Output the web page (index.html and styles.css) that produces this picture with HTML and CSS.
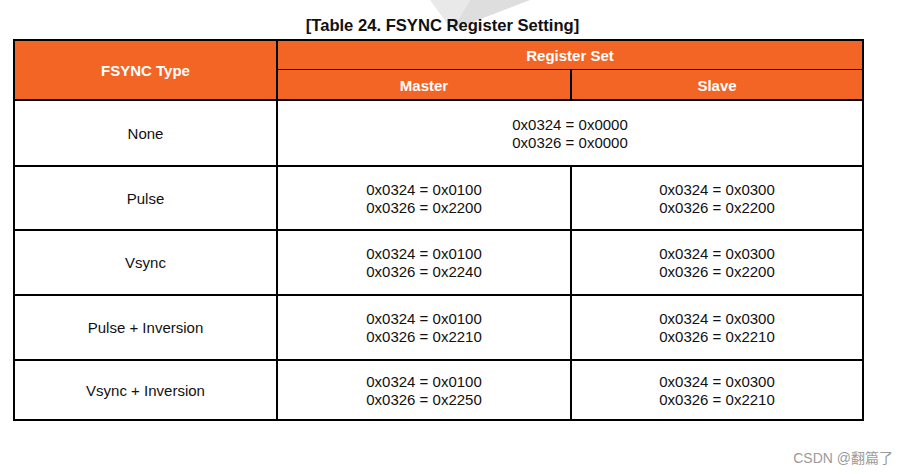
FILE: index.html
```html
<!DOCTYPE html>
<html lang="en">
<head>
<meta charset="utf-8">
<title>FSYNC Register Setting</title>
<link rel="stylesheet" href="styles.css">
</head>
<body>
<svg class="bg-mark" width="110" height="40" viewBox="0 0 110 40" aria-hidden="true">
  <polygon points="0,0 40,0 22,30" fill="#e9e9e9"/>
  <polygon points="40,0 100,0 22,30" fill="#dedede"/>
</svg>
<h1 class="title">[Table 24. FSYNC Register Setting]</h1>
<table class="reg">
  <colgroup>
    <col class="c-type">
    <col class="c-master">
    <col class="c-slave">
  </colgroup>
  <thead>
    <tr class="h-top">
      <th rowspan="2" class="th-type">FSYNC Type</th>
      <th colspan="2" class="th-set">Register Set</th>
    </tr>
    <tr class="h-sub">
      <th>Master</th>
      <th>Slave</th>
    </tr>
  </thead>
  <tbody>
    <tr class="r-none">
      <td>None</td>
      <td colspan="2">0x0324 = 0x0000<br>0x0326 = 0x0000</td>
    </tr>
    <tr class="r-pulse">
      <td>Pulse</td>
      <td>0x0324 = 0x0100<br>0x0326 = 0x2200</td>
      <td>0x0324 = 0x0300<br>0x0326 = 0x2200</td>
    </tr>
    <tr class="r-vsync">
      <td>Vsync</td>
      <td>0x0324 = 0x0100<br>0x0326 = 0x2240</td>
      <td>0x0324 = 0x0300<br>0x0326 = 0x2200</td>
    </tr>
    <tr class="r-pinv">
      <td>Pulse + Inversion</td>
      <td>0x0324 = 0x0100<br>0x0326 = 0x2210</td>
      <td>0x0324 = 0x0300<br>0x0326 = 0x2210</td>
    </tr>
    <tr class="r-vinv">
      <td>Vsync + Inversion</td>
      <td>0x0324 = 0x0100<br>0x0326 = 0x2250</td>
      <td>0x0324 = 0x0300<br>0x0326 = 0x2210</td>
    </tr>
  </tbody>
</table>
<div class="credit">CSDN @翻篇了</div>
</body>
</html>
```
FILE: styles.css
```css
html, body {
  margin: 0;
  padding: 0;
  background: #ffffff;
}

body {
  position: relative;
  width: 908px;
  height: 474px;
  overflow: hidden;
  font-family: "Liberation Sans", Arial, sans-serif;
  color: #111111;
}

.bg-mark {
  position: absolute;
  left: 430px;
  top: 0;
}

.title {
  position: relative;
  margin: 0 0 0 13px;
  width: 859px;
  height: 39px;
  box-sizing: border-box;
  padding-top: 16px;
  font-size: 16.6px;
  line-height: 20px;
  font-weight: bold;
  text-align: center;
  color: #111111;
}

.reg {
  margin-left: 13px;
  width: 851px;
  table-layout: fixed;
  border-collapse: separate;
  border-spacing: 0;
  border-top: 2px solid #000;
  border-left: 2px solid #000;
}

.c-type { width: 263px; }
.c-master { width: 294px; }
.c-slave { width: 292px; }

.reg th,
.reg td {
  padding: 1px 0 0;
  border-right: 2px solid #000;
  border-bottom: 2px solid #000;
  text-align: center;
  vertical-align: middle;
  font-size: 15px;
  line-height: 18px;
}

.reg th {
  background: #f26524;
  color: #ffffff;
  font-weight: bold;
}

.reg th.th-set {
  border-bottom-width: 1px;
}

.h-sub th {
  padding-top: 3px;
}

.h-top { height: 29px; }
.h-sub { height: 31px; }
.r-none { height: 66px; }
.r-pulse { height: 64px; }
.r-vsync { height: 65px; }
.r-pinv { height: 65px; }
.r-vinv { height: 60px; }

.credit {
  margin-top: 28px;
  padding-right: 15px;
  text-align: right;
  font-size: 14px;
  line-height: 18px;
  color: #9a9a9a;
  font-family: "Liberation Sans", "Noto Sans CJK SC", sans-serif;
}
```
